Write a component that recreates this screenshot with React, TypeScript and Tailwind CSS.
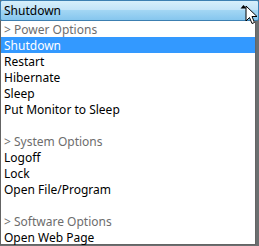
import React from "react";

const font = { fontFamily: '"Noto Sans", "Open Sans", sans-serif' };

type Row = { t: string; kind: "head" | "item" | "sel" | "blank" };

const rows: Row[] = [
  { t: "> Power Options", kind: "head" },
  { t: "Shutdown", kind: "sel" },
  { t: "Restart", kind: "item" },
  { t: "Hibernate", kind: "item" },
  { t: "Sleep", kind: "item" },
  { t: "Put Monitor to Sleep", kind: "item" },
  { t: "", kind: "blank" },
  { t: "> System Options", kind: "head" },
  { t: "Logoff", kind: "item" },
  { t: "Lock", kind: "item" },
  { t: "Open File/Program", kind: "item" },
  { t: "", kind: "blank" },
  { t: "> Software Options", kind: "head" },
  { t: "Open Web Page", kind: "item" },
];

export default function App() {
  return (
    <div className="w-[259px] h-[246px] bg-[#6b6f70] relative overflow-hidden text-[12px] leading-none" style={font}>
      <div className="h-[21px] w-[259px] border border-[#3c7fb1] rounded-[2px] flex items-center pl-[3px] pt-[1px] bg-[linear-gradient(to_bottom,#d6effb_0%,#c3e4f8_45%,#a2d6f4_50%,#86c6ee_100%)] text-black">
        Shutdown
      </div>
      <div className="w-[256px] h-[224px] bg-white border border-[#646464] border-t-0 flex flex-col">
        {rows.map((r, i) => (
          <div
            key={i}
            className={
              "h-[16px] shrink-0 flex items-center pl-[3px] pt-[1px] " +
              (r.kind === "sel"
                ? "bg-[#3399ff] text-white"
                : r.kind === "head"
                ? "text-[#6d6d6d]"
                : "text-black")
            }
          >
            {r.t}
          </div>
        ))}
      </div>
      <svg className="absolute left-[240px] top-[4px]" width="8" height="6" viewBox="0 0 8 6">
        <path d="M0.5 4.5 L3.5 1 L6.5 4.5 Z" fill="black" />
      </svg>
      <svg className="absolute left-[245px] top-[5px]" width="14" height="22" viewBox="0 0 14 22">
        <path d="M1 1 L1 16 L4.5 12.5 L7 18.5 L9.5 17.5 L7 11.5 L12 11.5 Z" fill="white" stroke="black" strokeWidth="1" strokeLinejoin="miter" />
      </svg>
    </div>
  );
}
